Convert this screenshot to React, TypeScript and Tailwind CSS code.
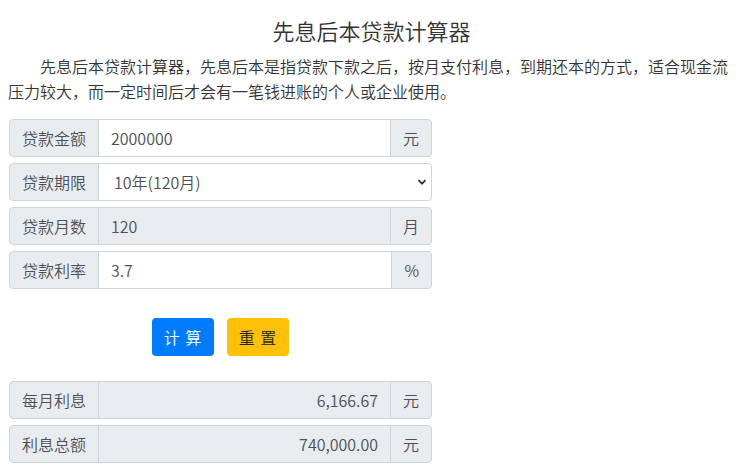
import React, { useState } from 'react';

const font = { fontFamily: '"Noto Sans CJK SC", "Noto Sans", sans-serif' };

const terms = [1, 2, 3, 5, 10, 15, 20, 30];

const Addon = ({ children, side }: { children: React.ReactNode; side: 'left' | 'right' }) => (
  <div
    className={
      'flex items-center px-3 bg-[#e9ecef] border border-[#ced4da] text-[#495057] text-base shrink-0 ' +
      (side === 'left' ? 'rounded-l-[4px]' : 'rounded-r-[4px] -ml-px')
    }
  >
    {children}
  </div>
);

const Row = ({ children }: { children: React.ReactNode }) => (
  <div className="flex h-[38px] items-stretch">{children}</div>
);

export default function App() {
  const [amount, setAmount] = useState('2000000');
  const [years, setYears] = useState(10);
  const [rate, setRate] = useState('3.7');
  const [result, setResult] = useState({ monthly: 6166.67, total: 740000 });

  const months = years * 12;

  const calc = () => {
    const a = parseFloat(amount) || 0;
    const r = (parseFloat(rate) || 0) / 100;
    const monthly = (a * r) / 12;
    setResult({ monthly, total: monthly * months });
  };

  const reset = () => {
    setAmount('');
    setRate('');
    setYears(10);
    setResult({ monthly: 0, total: 0 });
  };

  const fmt = (n: number) =>
    n.toLocaleString('en-US', { minimumFractionDigits: 2, maximumFractionDigits: 2 });

  return (
    <div className="min-h-screen bg-white px-2 font-[350] text-[#333]" style={font}>
      <h1 className="pt-[17px] text-center text-[22px] leading-[26px] font-[350] text-[#333]">
        先息后本贷款计算器
      </h1>
      <p className="mt-[11px] indent-[2em] text-base leading-[25px] text-[#333]">
        先息后本贷款计算器，先息后本是指贷款下款之后，按月支付利息，到期还本的方式，适合现金流压力较大，而一定时间后才会有一笔钱进账的个人或企业使用。
      </p>

      <div className="mt-[15px] ml-px w-[423px]">
        <div className="flex flex-col gap-[6px]">
          <Row>
            <Addon side="left">贷款金额</Addon>
            <input
              value={amount}
              onChange={(e) => setAmount(e.target.value)}
              className="flex-1 min-w-0 -ml-px border border-[#ced4da] px-3 text-base font-[350] text-[#495057] outline-none"
              style={font}
            />
            <Addon side="right">元</Addon>
          </Row>

          <Row>
            <Addon side="left">贷款期限</Addon>
            <div className="relative flex-1 -ml-px">
              <select
                value={years}
                onChange={(e) => setYears(Number(e.target.value))}
                className="h-full w-full appearance-none rounded-r-[4px] border border-[#ced4da] bg-white pl-[15px] pr-8 text-base font-[350] text-[#495057] outline-none"
                style={font}
              >
                {terms.map((t) => (
                  <option key={t} value={t}>
                    {t}年({t * 12}月)
                  </option>
                ))}
              </select>
              <svg
                className="pointer-events-none absolute right-[5px] top-1/2 -translate-y-1/2"
                width="10"
                height="10"
                viewBox="0 0 10 10"
              >
                <path d="M1.5 3.2 L5 6.7 L8.5 3.2" fill="none" stroke="#333" strokeWidth="1.8" />
              </svg>
            </div>
          </Row>

          <Row>
            <Addon side="left">贷款月数</Addon>
            <div className="flex flex-1 -ml-px items-center border border-[#ced4da] bg-[#e9ecef] px-3 text-base text-[#495057]">
              {months}
            </div>
            <Addon side="right">月</Addon>
          </Row>

          <Row>
            <Addon side="left">贷款利率</Addon>
            <input
              value={rate}
              onChange={(e) => setRate(e.target.value)}
              className="flex-1 min-w-0 -ml-px border border-[#ced4da] px-3 text-base font-[350] text-[#495057] outline-none"
              style={font}
            />
            <Addon side="right">%</Addon>
          </Row>
        </div>

        <div className="mt-[29px] flex justify-center gap-[13px]">
          <button
            onClick={calc}
            className="h-[38px] w-[62px] rounded-[4px] bg-[#007bff] text-base text-white tracking-[1px]"
          >
            计 算
          </button>
          <button
            onClick={reset}
            className="h-[38px] w-[62px] rounded-[4px] bg-[#ffc107] text-base text-[#212529] tracking-[1px]"
          >
            重 置
          </button>
        </div>

        <div className="mt-[25px] flex flex-col gap-[6px]">
          <Row>
            <Addon side="left">每月利息</Addon>
            <div className="flex flex-1 -ml-px items-center justify-end border border-[#ced4da] bg-[#e9ecef] px-3 text-base text-[#495057]">
              {fmt(result.monthly)}
            </div>
            <Addon side="right">元</Addon>
          </Row>
          <Row>
            <Addon side="left">利息总额</Addon>
            <div className="flex flex-1 -ml-px items-center justify-end border border-[#ced4da] bg-[#e9ecef] px-3 text-base text-[#495057]">
              {fmt(result.total)}
            </div>
            <Addon side="right">元</Addon>
          </Row>
        </div>
      </div>
    </div>
  );
}
